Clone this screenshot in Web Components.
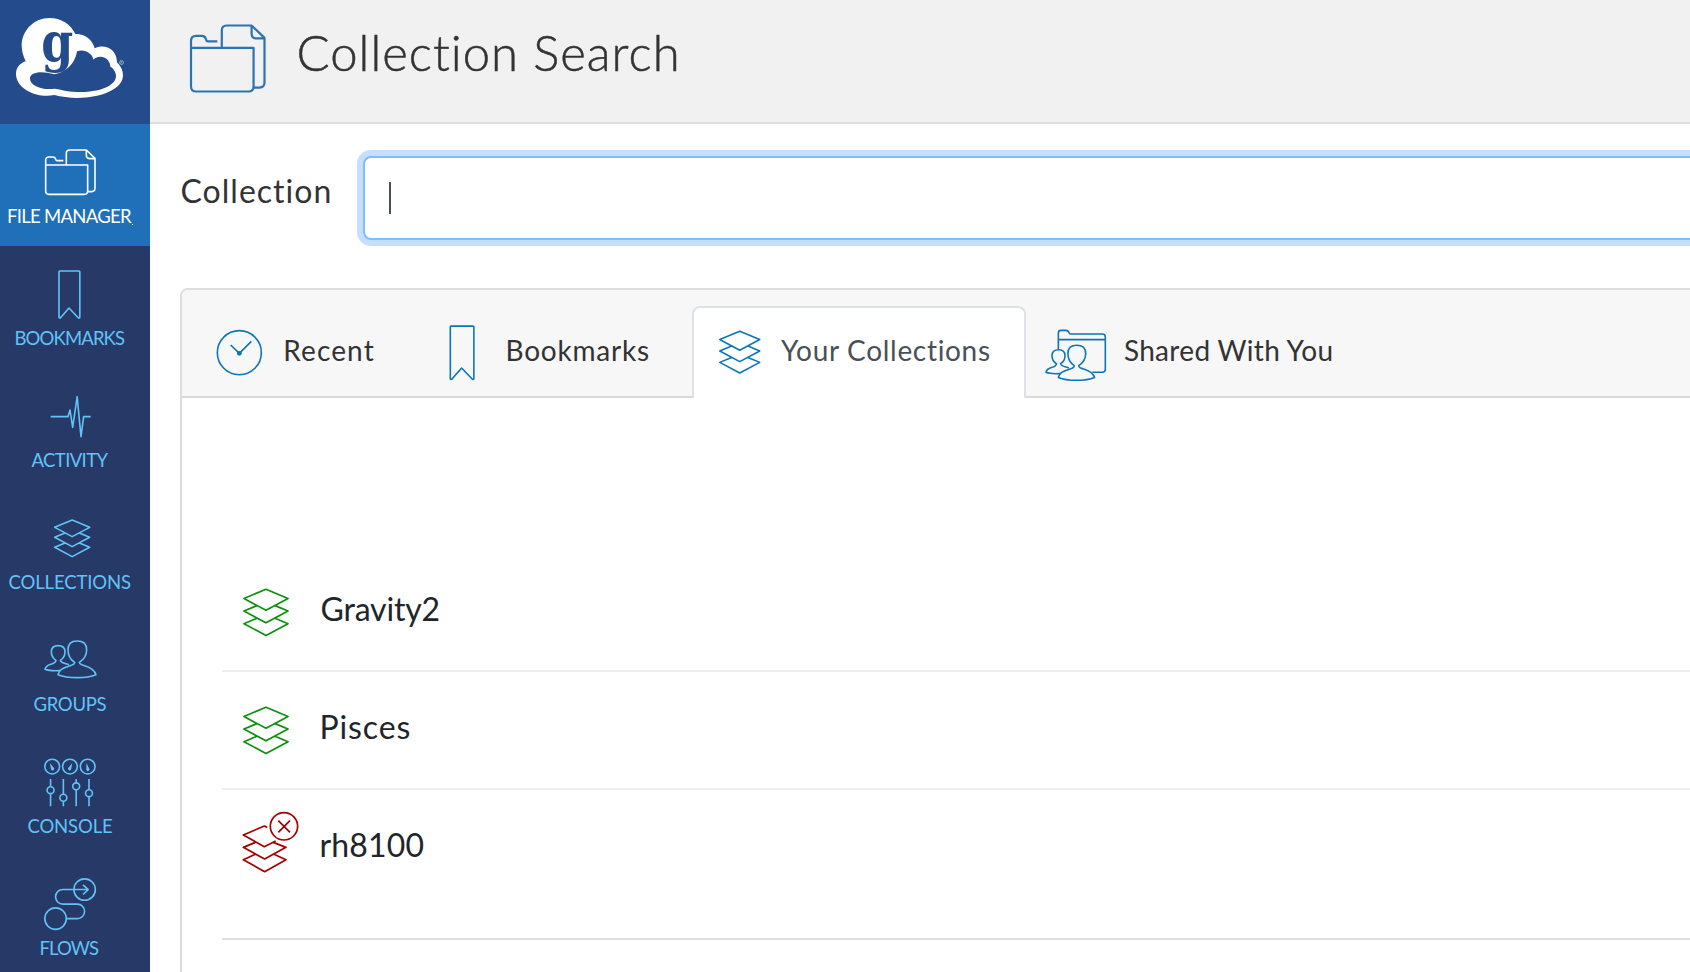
<!DOCTYPE html>
<html lang="en">
<head>
<meta charset="utf-8">
<title>Collection Search</title>
<style>
html,body{margin:0;height:100%;overflow:hidden;background:#fff}
body{font-family:Lato,"Open Sans",sans-serif;color:#333}
</style>
</head>
<body>
<app-shell></app-shell>
<script>
const define=(name,html,setup)=>{
  const t=document.createElement('template');t.innerHTML=html;
  customElements.define(name,class extends HTMLElement{
    connectedCallback(){
      if(this.shadowRoot)return;
      this.attachShadow({mode:'open'}).append(t.content.cloneNode(true));
      if(setup)setup(this,this.shadowRoot);
    }
  });
};

const person='<path d="M222 549C222 556 216 557 206 560C184 567 176 572 172 586C200 598 258 598 286 586C282 572 272 566 254 560C242 557 236 555 236 549C250 540 258 525 258 511C258 494 247 485 229.500 485C212 485 202 494 202 511C202 525 208 540 222 549Z"/><path d="M205 556C195 552 180 551 179 543C187 538 193 528 193 518C193 505 184 499 172.500 499C160 499 152 505 152 518C152 528 158 538 166 543C165 549 160 552 150 555C140 558 135 562 133 570C145 575 160 575 178 574"/>';
const ICONS={
  folder:['134 446 154 139','<path d="M136 494H262V572q0 10-10 10H146q-10 0-10-10ZM136 494V480q0-10 10-10H157q8 0 9 7q1 4 4 4H189M198 494V459q0-10 10-10H258L284 474V564q0 10-10 10H262M258 449V465q0 10 10 10H284"/>'],
  bookmark:['176 74 68 148','<path d="M181 77H239q2.500 0 2.500 2.500V216q0 3-4 2L209 188L183 218q-4 1-4-2V79.500q0-2.500 2-2.500Z"/>'],
  activity:['148 448 124 130','<path d="M150 513H202L208 493L216 545L229.500 453L241 573L249 513H270"/>'],
  stack:['160 117 109 116','<path d="M214.500 120L267 142L214.500 170L162 142ZM193 159L162 172L214.500 200L267 172L236 159M193 189L162 202L214.500 230L267 202L236 189"/>'],
  groups:['130 482 160 116',person],
  console:['131 97 158 148','<circle cx="156" cy="122" r="22.500"/><circle cx="210" cy="122" r="22.500"/><circle cx="264" cy="122" r="22.500"/><path fill="currentColor" stroke="none" d="M149 111L160 125a5 5 0 1 1-8 4ZM217 111L214 129a5 5 0 1 1-8-4ZM260 110L268 127a5 5 0 1 1-8 2Z"/><path d="M151 160V184M151 205V243M190 160V207M190 228V243M229 160V172M229 193V243M268 160V193M268 214V243"/><circle cx="151" cy="194" r="10.500"/><circle cx="190" cy="217" r="10.500"/><circle cx="229" cy="182" r="10.500"/><circle cx="268" cy="203" r="10.500"/>'],
  flows:['131 457 158 159','<circle cx="166" cy="580" r="32.500"/><circle cx="254" cy="492" r="32.500"/><path d="M265 492H188a22 22 0 0 0 0 44H232a22 22 0 0 1 0 44H199M249 478L265 492L249 507"/>'],
  clock:['140 175 140 140','<circle cx="210" cy="246" r="66"/><path d="M184 223L210 248L246 212"/><circle cx="210" cy="248" r="5" fill="currentColor"/>'],
  shared:['134 116 185 157','<path d="M174 178V128q0-8 8-8H196q8 0 10 7q1 4 5 4H306q9 0 9 9V237q0 9-9 9H276M174 148H315"/><g transform="translate(9.740 -298.180) scale(.955)">'+person+'</g>'],
  stackoff:['95 362 175 188','<path d="M174 411L165 407L102 434L165 469L199 452M138 456L102 471L166 506L230 471L192 456M138 492L102 508L166 544L230 508L194 492"/><circle cx="224" cy="408" r="41"/><path d="M207 391L242 426M242 391L207 426"/>']
};
define('line-icon',`<style>
:host{display:block;flex:none}
svg{display:block;width:100%;height:100%;fill:none;stroke:currentColor;stroke-width:var(--stroke,1.5px);stroke-linejoin:round;stroke-linecap:butt;overflow:visible}
svg *{vector-effect:non-scaling-stroke}
</style><svg></svg>`,(el,root)=>{
  const [box,body]=ICONS[el.getAttribute('name')];
  const svg=root.querySelector('svg');svg.setAttribute('viewBox',box);svg.innerHTML=body;
});

/* A line of text whose tracking is set so that its ink spans a given width. */
define('track-text',`<style>:host{display:block;white-space:nowrap}</style><slot></slot>`,(el)=>{
  const s=getComputedStyle(el),c=document.createElement('canvas').getContext('2d');
  c.font=s.fontWeight+' '+s.fontSize+' '+s.fontFamily;
  const t=el.textContent,m=c.measureText(t);
  const ink=m.actualBoundingBoxLeft+m.actualBoundingBoxRight;
  const gap=(el.getAttribute('ink')-ink)/(t.length-1);
  el.style.letterSpacing=gap.toFixed(3)+'px';
  el.style.marginLeft=m.actualBoundingBoxLeft.toFixed(2)+'px';
  el.style.marginRight=(-gap).toFixed(2)+'px';
});

define('brand-logo',`<style>
:host{display:block;height:124px;background:#244b8b}
svg{display:block;width:150px;height:124px}
text{font-family:"DejaVu Serif",serif;font-weight:700}
</style><svg viewBox="0 0 450 372">
<path fill="#fff" d="M77 184C68 165 65 150 65 136C66 90 103 54 148 54C183 54 212 72 226 102C255 101 277 118 284 145C312 130 351 146 351 187C364 200 369 213 369 226C369 268 302 294 232 294C207 294 184 290 163 285C112 295 48 268 48 221C48 204 59 190 77 184Z"/>
<path fill="#244b8b" d="M198 208C216 196 228 176 231 154C251 145 278 159 280 179C299 162 329 171 331 200C342 206 348 218 348 228C348 256 302 276 242 276C207 276 189 270 164 266C124 272 90 255 90 236C90 216 124 212 163 223C182 220 190 213 198 208Z"/>
<text x="124" y="182" font-size="160" fill="#244b8b" textLength="96" lengthAdjust="spacingAndGlyphs">g</text>
<circle cx="364.500" cy="187.500" r="6" fill="none" stroke="#b7c7df" stroke-width="2"/>
<path d="M362.500 191V184.500H365a1.700 1.700 0 0 1 0 3.400H363M365 188L367 191" fill="none" stroke="#b7c7df" stroke-width="1.300"/>
</svg>`);

define('nav-item',`<style>
:host{display:block;height:122px;color:#61c3fa;position:relative;font-size:18.500px;line-height:22px;--stroke:1.600px}
:host([active]){background:#1f70b9;color:#fff}
.pic{height:81px;display:flow-root}
i{position:absolute;left:132px;top:100px;width:1px;height:1px;background:#fff;display:none}
:host([active]) i{display:block}
</style><div class="pic"><slot name="icon"></slot></div><slot></slot><i></i>`);

define('app-nav',`<style>
:host{display:block;width:150px;height:972px;flex:none;background:#273966;overflow:hidden}
</style><brand-logo></brand-logo><div id="items"></div>`,(el,root)=>{
  /* icon, label, label ink width, label left, then icon left, top, width, height */
  const rows=[
    ['folder','FILE MANAGER',124,8,44.67,25,51.33,46.33],
    ['bookmark','BOOKMARKS',109.5,15.5,58.3,24,22.67,49.33],
    ['activity','ACTIVITY',77,31.5,49.6,27,41.33,43.33],
    ['stack','COLLECTIONS',122.5,8.5,53.7,29.4,36.33,38.67],
    ['groups','GROUPS',73,33.5,43.6,28.4,53.33,38.67],
    ['console','CONSOLE',84.5,27.5,43.67,23.9,51.9,49.33],
    ['flows','FLOWS',58.5,40.5,43.67,21.9,52.2,52.5]
  ];
  const host=root.getElementById('items');
  rows.forEach(([icon,label,ink,x,l,t,w,h],i)=>{
    const item=document.createElement('nav-item');
    if(i===0)item.setAttribute('active','');
    item.innerHTML=`<line-icon slot="icon" name="${icon}" style="width:${w}px;height:${h}px;margin:${t}px 0 0 ${l}px"></line-icon><track-text ink="${ink}" style="padding-left:${x}px">${label}</track-text>`;
    host.append(item);
  });
});

define('page-header',`<style>
:host{display:flex;height:122px;background:#f1f1f1;border-bottom:2px solid #ddd;padding-left:40px}
line-icon{width:76.500px;height:69px;margin-top:23.700px;color:#2b74b1;--stroke:2.200px}
h1{margin:23px 0 0 32px;font-weight:300;font-size:49px;line-height:58px;color:#333;-webkit-text-stroke:.5px #333}
</style><line-icon name="folder"></line-icon><h1><track-text ink="379">Collection Search</track-text></h1>`);

define('search-field',`<style>
:host{display:flex;padding:32px 0 0 31.500px;height:132px;box-sizing:border-box}
.label{width:181.500px;flex:none;font-size:32px;line-height:38px;padding-top:15.500px;box-sizing:border-box}
.box{box-sizing:border-box;height:84px;width:1400px;flex:none;border:2px solid #80bdff;border-radius:8px;box-shadow:0 0 0 6px #c6deff;background:#fff;padding:24px}
.caret{width:2px;height:32px;background:#495057}
</style><div class="label"><track-text ink="148.500">Collection</track-text></div><div class="box"><div class="caret"></div></div>`);

define('tab-item',`<style>
:host{display:flex;box-sizing:border-box;height:92px;flex:none;border:2px solid transparent;border-bottom:0;font-size:28px;line-height:34px;color:#333;--stroke:1.600px}
:host([active]){background:#fff;border-color:#dee2e6;border-radius:8px 8px 0 0;color:#495057}
.icon{flex:none;color:#0a76b7;width:var(--iw)}
.text{padding-top:25px}
</style><div class="icon"><slot name="icon"></slot></div><div class="text"><slot></slot></div>`);

define('list-row',`<style>
:host{display:flex;box-sizing:border-box;height:118px;border-bottom:2px solid #eee;padding-left:19px;font-size:32px;line-height:38px;color:#212529;--stroke:1.700px}
.icon{width:80.500px;flex:none}
.text{padding-top:35.500px}
:host([last]){height:150px;border-color:#ddd}
</style><div class="icon"><slot name="icon"></slot></div><div class="text"><slot></slot></div>`);

define('collection-panel',`<style>
:host{display:block;margin:32px 0 0 30px;width:1600px;box-sizing:border-box;height:760px;border:2px solid #ddd;border-radius:8px 8px 0 0;overflow:hidden}
.tabs{display:flex;height:108px;box-sizing:border-box;background:linear-gradient(#f7f7f7 106px,#d9d9d9 106px);padding-top:16px}
.list{padding:156px 0 0 40px}
.ok{width:46px;height:48.700px;margin:34.300px 0 0 2.200px;color:#0c910c}
.off{width:58.300px;height:62.700px;margin:20.700px 0 0 .2px;color:#a30000}
</style>
<div class="tabs">
<tab-item style="width:240px;padding-left:32.200px;--iw:69px"><line-icon slot="icon" name="clock" style="width:46.700px;height:46.700px;margin-top:20.700px"></line-icon><track-text ink="88.500">Recent</track-text></tab-item>
<tab-item style="width:270px;padding-left:24.600px;--iw:58.900px"><line-icon slot="icon" name="bookmark" style="width:26px;height:55.800px;margin-top:16.800px"></line-icon><track-text ink="141.500">Bookmarks</track-text></tab-item>
<tab-item active style="width:334px;padding-left:25px;--iw:62px"><line-icon slot="icon" name="stack" style="width:41.500px;height:44.200px;margin-top:22px"></line-icon><track-text ink="210">Your Collections</track-text></tab-item>
<tab-item style="width:340px;padding-left:16.700px;--iw:79.200px"><line-icon slot="icon" name="shared" style="width:61.700px;height:52.300px;margin-top:20.500px"></line-icon><track-text ink="209">Shared With You</track-text></tab-item>
</div>
<div class="list">
<list-row><line-icon class="ok" slot="icon" name="stack"></line-icon><track-text ink="117">Gravity2</track-text></list-row>
<list-row><line-icon class="ok" slot="icon" name="stack"></line-icon><track-text ink="88">Pisces</track-text></list-row>
<list-row last><line-icon class="off" slot="icon" name="stackoff"></line-icon><track-text ink="102">rh8100</track-text></list-row>
</div>`);

define('app-shell',`<style>
:host{display:flex;width:1690px;height:972px;overflow:hidden}
main{flex:1;min-width:0;overflow:hidden}
</style><app-nav></app-nav><main><page-header></page-header><search-field></search-field><collection-panel></collection-panel></main>`);
</script>
</body>
</html>
